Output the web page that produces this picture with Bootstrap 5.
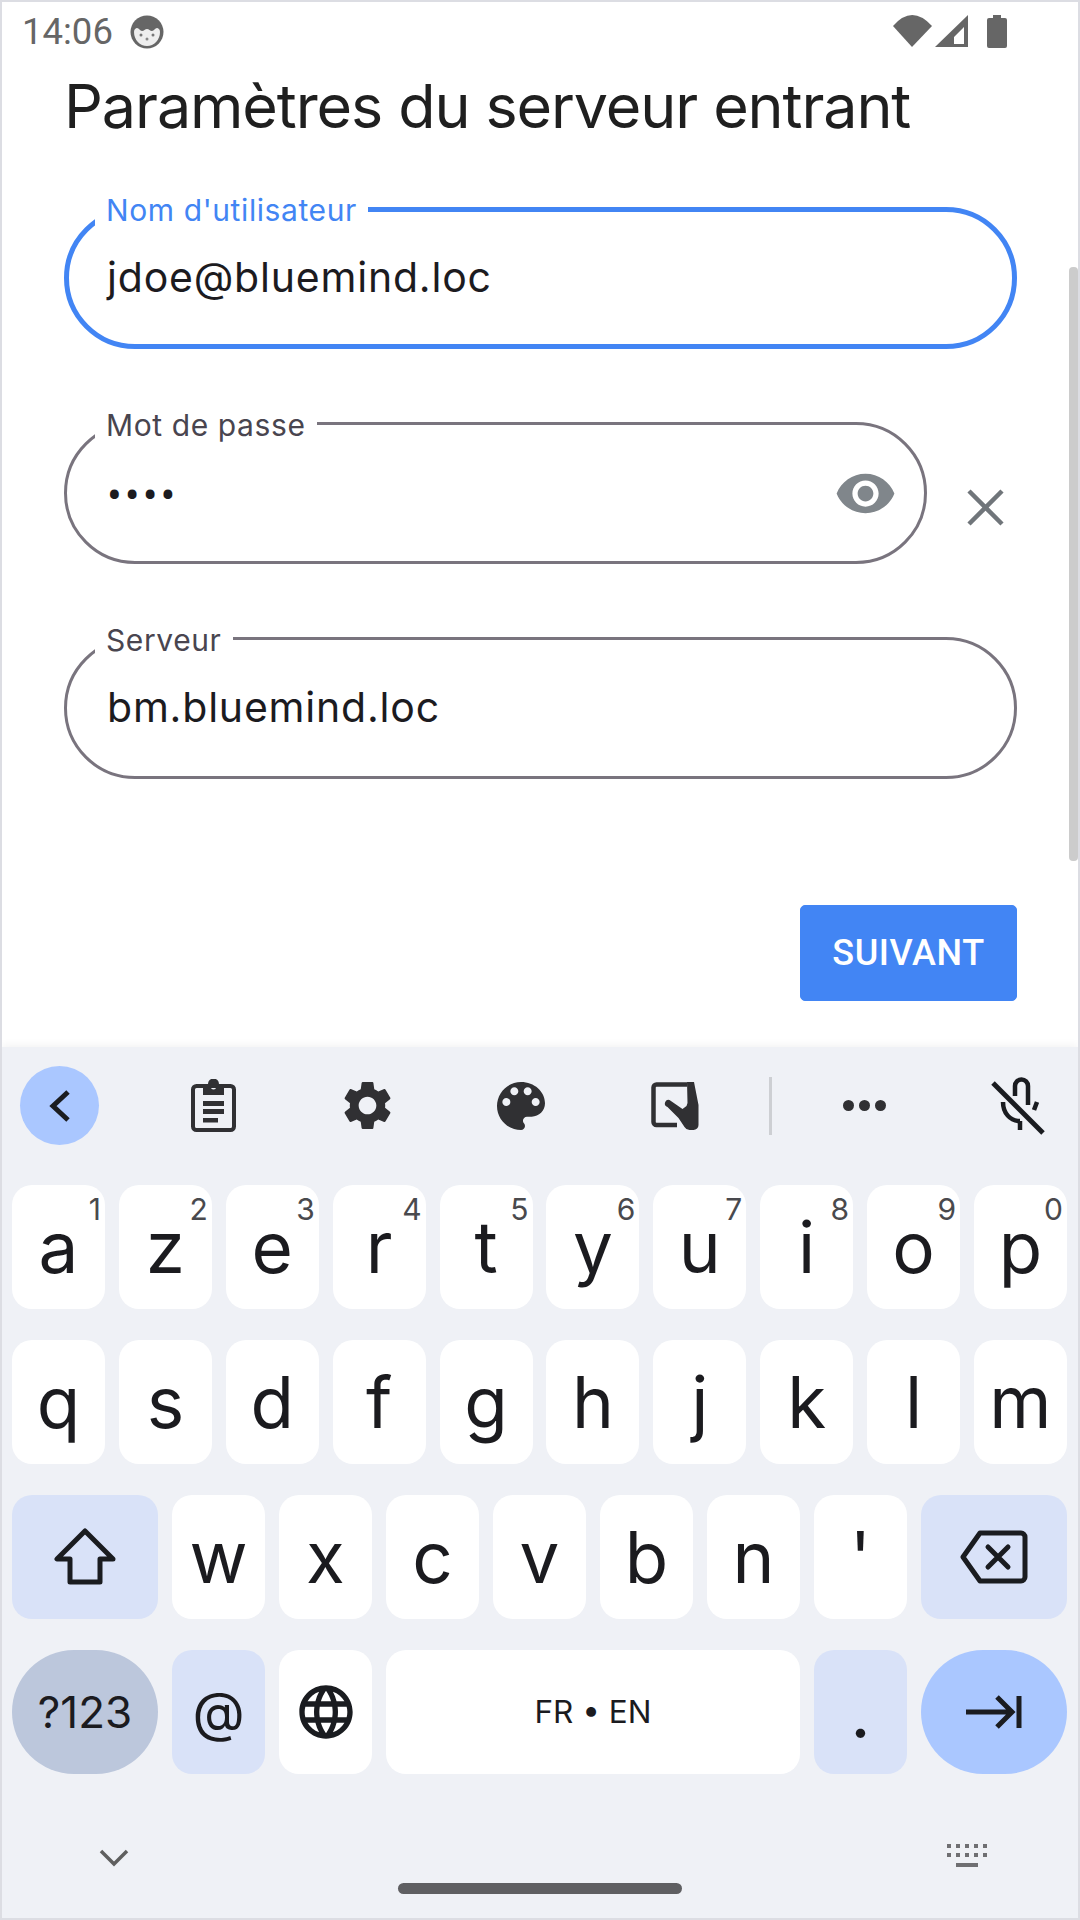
<!DOCTYPE html>
<html lang="fr">
<head>
  <meta charset="UTF-8" />
  <meta name="viewport" content="width=device-width, initial-scale=1.0"/>
  <title>Paramètres du serveur entrant</title>
  <link rel="stylesheet" href="https://cdn.jsdelivr.net/npm/bootstrap@5.3.0/dist/css/bootstrap.min.css"/>
  <style>
    body { margin: 0; background: #fff; font-family: Inter, Roboto, sans-serif; color: #1c1b1f; }
    .phone { position: relative; width: 1080px; height: 1920px; border: 2px solid #dcdde3; overflow: hidden; background: #fff; }

    .status-row { height: 60px; padding: 0 69px 0 20px; color: #666; font-family: Roboto, sans-serif; font-size: 36.5px; }
    .status-time { line-height: 1; }
    .status-left { gap: 17px; }

    .page-body { padding: 0 61px 0 62px; flex: 1 1 auto; }
    .page-title { font-family: Inter, Roboto, sans-serif; font-size: 61px; font-weight: 400; letter-spacing: -1.1px; line-height: 72px; margin: 8px 0 0 0; color: #1f1f1f; }

    .field { position: relative; height: 142px; }
    .field .form-control { height: 100%; border: 3px solid #79747e; border-radius: 71px; padding: 0 40px; font-family: Inter, Roboto, sans-serif; font-size: 41px; letter-spacing: .8px; color: #1c1b1f; display: flex; align-items: center; background: transparent; }
    .field-active .form-control { border: 5px solid #4285f4; padding: 0 38px; }
    .field-first { margin-top: 65px; }
    .field-label { position: absolute; left: 31px; top: -12px; height: 31px; padding: 0 11px; background: #fff; font-size: 30px; letter-spacing: .6px; line-height: 31px; color: #49454f; }
    .field-active .field-label { color: #4285f4; }
    .field-gap { margin-top: 73px; }
    .field-short { width: 863px; }
    .field .password-dots { font-family: Roboto, sans-serif; letter-spacing: 3px; font-size: 44px; padding-top: 6px; }
    .eye-icon { position: absolute; right: 30px; top: 40px; }
    .clear-icon { margin: 67px 13px 0 40px; }

    .next-btn { --bs-btn-bg: #4285f4; --bs-btn-border-color: #4285f4; width: 217px; height: 96px; margin-top: 126px; font-family: Roboto, sans-serif; font-size: 36px; font-weight: 500; letter-spacing: .6px; border-radius: 5px; padding: 0; }

    .scroll-thumb { position: absolute; right: 0; top: 265px; width: 9px; height: 594px; background: #ccc; border-radius: 4px; }

    .kbd { height: 871px; background: #eff1f6; box-shadow: 0 -2px 8px rgba(0,0,0,.05); flex: 0 0 auto; }
    .kbd-tools { height: 100px; padding: 19px 0 0 18px; }
    .tool-back { width: 79px; height: 79px; border-radius: 50%; background: #aac7ff; }
    .tool-cell { width: 154px; height: 79px; }
    .tool-first { margin-left: 37px; }
    .tool-sep { width: 3px; height: 58px; background: #cdcfd3; margin: 11px 16px 0 17px; }
    .tool-last { width: 100px; margin-left: 26px; }
    .tool-dots { gap: 5px; padding-right: 2px; }
    .dot-ico { width: 11px; height: 11px; border-radius: 50%; background: #303033; }

    .kbd-rows { padding: 38px 11px 0 10px; display: flex; flex-direction: column; gap: 31px; }
    .key { position: relative; width: 93px; height: 124px; flex: 0 0 auto; background: #fff; border-radius: 20px; font-size: 71px; line-height: 1; color: #1b1b1f; display: flex; align-items: center; justify-content: center; }
    .key-wide { width: 146px; }
    .key-mod { background: #d9e2f8; }
    .key-pill { border-radius: 62px; }
    .key-sym { background: #bcc7dc; font-size: 44px; }
    .key-go { background: #aac7ff; }
    .key-space { width: 414px; font-size: 31.5px; }
    .key-at { font-size: 54px; }
    .key-hint { position: absolute; top: 9px; right: 4px; font-size: 30px; line-height: 1; color: #49494d; }

    .kbd-foot { height: 148px; position: relative; }
    .foot-pill { position: absolute; left: 396px; top: 109px; width: 284px; height: 11px; border-radius: 6px; background: #5f5f62; }
    .foot-chev { position: absolute; left: 97px; top: 74px; }
    .foot-kbd { position: absolute; left: 945px; top: 70px; }
  </style>
</head>
<body>
  <div class="phone d-flex flex-column">
    <!-- status bar -->
    <div class="status-row d-flex align-items-center justify-content-between flex-shrink-0">
      <div class="status-left d-flex align-items-center">
        <span class="status-time">14:06</span>
        <svg width="34" height="34" viewBox="0 0 34 34">
          <circle cx="17" cy="17" r="16.500" fill="#666"/>
          <path d="M4 17c0-3 2-4 3-4 2 0 3 3 5 3s3-2 5-2 3 2 5 2 3-3 5-3c1 0 3 1 3 4 0 8-6 14-13 14S4 25 4 17z" fill="#eee"/>
          <circle cx="11" cy="20" r="1.500" fill="#777"/><circle cx="23" cy="20" r="1.500" fill="#777"/><circle cx="17" cy="24" r="1.500" fill="#888"/>
        </svg>
      </div>
      <svg width="118" height="38" viewBox="0 0 118 38" fill="#666">
        <path d="M2 13Q21-9 41 13L21 34z"/>
        <path fill-rule="evenodd" d="M44 34 77 2v32zM63 31h10V14L63 24z"/>
        <path d="M102 2h8v3h4a2 2 0 0 1 2 2v26a2 2 0 0 1-2 2H98a2 2 0 0 1-2-2V7a2 2 0 0 1 2-2h4z"/>
      </svg>
    </div>

    <!-- form -->
    <div class="page-body">
      <h1 class="page-title">Paramètres du serveur entrant</h1>

      <div class="field field-active field-first">
        <div class="form-control">jdoe@bluemind.loc</div>
        <span class="field-label">Nom d'utilisateur</span>
      </div>

      <div class="d-flex align-items-start field-gap">
        <div class="field field-short">
          <div class="form-control password-dots">••••</div>
          <span class="field-label">Mot de passe</span>
          <svg class="eye-icon" width="63" height="63" viewBox="0 0 24 24" fill="#80868b"><path d="M12 4.5C7 4.5 2.73 7.61 1 12c1.73 4.39 6 7.5 11 7.5s9.27-3.11 11-7.5c-1.73-4.39-6-7.5-11-7.5zM12 17c-2.76 0-5-2.24-5-5s2.24-5 5-5 5 2.24 5 5-2.24 5-5 5zm0-8c-1.66 0-3 1.34-3 3s1.34 3 3 3 3-1.34 3-3-1.34-3-3-3z"/></svg>
        </div>
        <svg class="clear-icon" width="37" height="37" viewBox="0 0 37 37"><path d="M2 2l33 33M35 2 2 35" stroke="#70757a" stroke-width="4.5" fill="none"/></svg>
      </div>

      <div class="field field-gap">
        <div class="form-control">bm.bluemind.loc</div>
        <span class="field-label">Serveur</span>
      </div>

      <div class="d-flex justify-content-end">
        <button type="button" class="btn btn-primary next-btn">SUIVANT</button>
      </div>
    </div>
    <div class="scroll-thumb"></div>

    <!-- keyboard -->
    <div class="kbd">
      <div class="kbd-tools d-flex align-items-start">
        <div class="tool-back d-flex align-items-center justify-content-center">
          <svg width="22" height="34" viewBox="0 0 22 34"><path d="M19 3 4 17l15 14" fill="none" stroke="#1a1c20" stroke-width="5"/></svg>
        </div>
        <div class="tool-cell tool-first d-flex align-items-center justify-content-center">
          <svg width="45" height="53" viewBox="0 0 45 53" fill="#303033">
            <rect x="2" y="7" width="41" height="44" rx="3.5" fill="none" stroke="#303033" stroke-width="4"/>
            <path fill-rule="evenodd" d="M12 5h5a5.5 5.5 0 0 1 11 0h5v11H12zM22.500 5.500a2.500 2.500 0 1 0 0 5 2.500 2.500 0 0 0 0-5z"/>
            <path d="M12 22h21v5H12zM12 30h21v5H12zM12 39h15v4.500H12z"/>
          </svg>
        </div>
        <div class="tool-cell d-flex align-items-center justify-content-center">
          <svg width="59" height="59" viewBox="0 0 24 24" fill="#303033"><path d="M19.14 12.94c.04-.3.06-.61.06-.94 0-.32-.02-.64-.07-.94l2.03-1.58c.18-.14.23-.41.12-.61l-1.92-3.32c-.12-.22-.37-.29-.59-.22l-2.39.96c-.5-.38-1.03-.7-1.62-.94l-.36-2.54c-.04-.24-.24-.41-.48-.41h-3.84c-.24 0-.43.17-.47.41l-.36 2.54c-.59.24-1.13.57-1.62.94l-2.39-.96c-.22-.08-.47 0-.59.22L2.74 8.87c-.12.21-.08.47.12.61l2.03 1.58c-.05.3-.09.63-.09.94s.02.64.07.94l-2.03 1.58c-.18.14-.23.41-.12.61l1.92 3.32c.12.22.37.29.59.22l2.39-.96c.5.38 1.03.7 1.62.94l.36 2.54c.05.24.24.41.48.41h3.84c.24 0 .44-.17.47-.41l.36-2.54c.59-.24 1.13-.56 1.62-.94l2.39.96c.22.08.47 0 .59-.22l1.92-3.32c.12-.22.07-.47-.12-.61l-2.01-1.58zM12 15.6c-1.98 0-3.6-1.62-3.6-3.6s1.62-3.6 3.6-3.6 3.6 1.62 3.6 3.6-1.62 3.6-3.6 3.6z"/></svg>
        </div>
        <div class="tool-cell d-flex align-items-center justify-content-center">
          <svg width="64" height="64" viewBox="0 0 24 24" fill="#303033"><path d="M12 3c-4.97 0-9 4.03-9 9s4.03 9 9 9c.83 0 1.5-.67 1.5-1.5 0-.39-.15-.74-.39-1.01-.23-.26-.38-.61-.38-.99 0-.83.67-1.5 1.5-1.5H16c2.76 0 5-2.24 5-5 0-4.42-4.03-8-9-8zm-5.500 9c-.83 0-1.500-.67-1.500-1.500S5.670 9 6.500 9 8 9.670 8 10.500 7.330 12 6.500 12zm3-4C8.670 8 8 7.330 8 6.500S8.670 5 9.500 5s1.500.67 1.500 1.500S10.330 8 9.500 8zm5 0c-.83 0-1.500-.67-1.500-1.500S13.670 5 14.500 5s1.500.67 1.500 1.500S15.330 8 14.500 8zm3 4c-.83 0-1.500-.67-1.500-1.500S16.670 9 17.500 9s1.500.67 1.500 1.500-.67 1.500-1.500 1.500z"/></svg>
        </div>
        <div class="tool-cell d-flex align-items-center justify-content-center">
          <svg width="48" height="48" viewBox="0 0 48 48" fill="#303033">
            <path d="M36 2.500H5.500a3 3 0 0 0-3 3V40a3 3 0 0 0 3 3H26" fill="none" stroke="#303033" stroke-width="4.500"/>
            <path d="M36 0h7l4.500 23v20a5 5 0 0 1-5 5h-4a6 6 0 0 1-5-3l-6-9-11-11a3.500 3.500 0 0 1 2-7l13 9 4-3 1-3z"/>
          </svg>
        </div>
        <div class="tool-sep"></div>
        <div class="tool-cell tool-dots d-flex align-items-center justify-content-center">
          <span class="dot-ico"></span><span class="dot-ico"></span><span class="dot-ico"></span>
        </div>
        <div class="tool-cell tool-last d-flex align-items-center justify-content-center">
          <svg width="56" height="58" viewBox="0 0 56 58" fill="none" stroke="#1a1c20" stroke-width="4.500">
            <path d="M3 6l50 50" stroke-width="5"/>
            <path d="M25 19V9a6.500 6.500 0 0 1 13 0v19"/>
            <path d="M13 25c0 11 7 19 17 19M47 25l-3 8"/>
            <path d="M30 44v9"/>
          </svg>
        </div>
      </div>

      <div class="kbd-rows">
        <div class="d-flex justify-content-between">
          <div class="key">a<span class="key-hint">1</span></div>
          <div class="key">z<span class="key-hint">2</span></div>
          <div class="key">e<span class="key-hint">3</span></div>
          <div class="key">r<span class="key-hint">4</span></div>
          <div class="key">t<span class="key-hint">5</span></div>
          <div class="key">y<span class="key-hint">6</span></div>
          <div class="key">u<span class="key-hint">7</span></div>
          <div class="key">i<span class="key-hint">8</span></div>
          <div class="key">o<span class="key-hint">9</span></div>
          <div class="key">p<span class="key-hint">0</span></div>
        </div>
        <div class="d-flex justify-content-between">
          <div class="key">q</div><div class="key">s</div><div class="key">d</div><div class="key">f</div><div class="key">g</div>
          <div class="key">h</div><div class="key">j</div><div class="key">k</div><div class="key">l</div><div class="key">m</div>
        </div>
        <div class="d-flex justify-content-between">
          <div class="key key-wide key-mod">
            <svg width="62" height="58" viewBox="0 0 62 58"><path d="M31 3 3 31h13v23h30V31h13z" fill="none" stroke="#1a1c20" stroke-width="5" stroke-linejoin="round"/></svg>
          </div>
          <div class="key">w</div><div class="key">x</div><div class="key">c</div><div class="key">v</div>
          <div class="key">b</div><div class="key">n</div><div class="key">'</div>
          <div class="key key-wide key-mod">
            <svg width="68" height="54" viewBox="0 0 68 54" fill="none" stroke="#1a1c20" stroke-width="5"><path d="M20 3h41a4 4 0 0 1 4 4v40a4 4 0 0 1-4 4H20L3 27z" stroke-linejoin="round"/><path d="M28 17l20 20M48 17 28 37" stroke-linecap="round"/></svg>
          </div>
        </div>
        <div class="d-flex justify-content-between">
          <div class="key key-wide key-pill key-sym">?123</div>
          <div class="key key-mod key-at">@</div>
          <div class="key">
            <svg width="64" height="64" viewBox="0 0 24 24" fill="#1a1c20"><path d="M11.99 2C6.47 2 2 6.48 2 12s4.47 10 9.99 10C17.52 22 22 17.52 22 12S17.52 2 11.99 2zm6.93 6h-2.95c-.32-1.25-.78-2.45-1.38-3.56 1.84.63 3.37 1.91 4.33 3.56zM12 4.040c.83 1.2 1.48 2.53 1.91 3.96h-3.82c.43-1.43 1.08-2.76 1.91-3.96zM4.260 14C4.100 13.360 4 12.690 4 12s.1-1.360.26-2h3.380c-.08.66-.14 1.32-.14 2 0 .68.06 1.34.14 2H4.260zm.82 2h2.950c.32 1.25.78 2.45 1.380 3.560-1.840-.63-3.370-1.900-4.330-3.560zm2.950-8H5.080c.96-1.660 2.490-2.930 4.330-3.560C8.810 5.550 8.350 6.750 8.030 8zM12 19.960c-.83-1.200-1.480-2.530-1.910-3.960h3.820c-.43 1.430-1.080 2.760-1.910 3.960zM14.340 14H9.660c-.09-.66-.16-1.320-.16-2 0-.68.07-1.350.16-2h4.680c.09.650.16 1.320.16 2 0 .68-.07 1.340-.16 2zm.25 5.560c.6-1.110 1.060-2.310 1.380-3.560h2.950c-.96 1.650-2.490 2.930-4.330 3.560zM16.360 14c.08-.66.14-1.320.14-2 0-.68-.06-1.340-.14-2h3.380c.16.64.26 1.310.26 2s-.1 1.360-.26 2h-3.380z"/></svg>
          </div>
          <div class="key key-space">FR • EN</div>
          <div class="key key-mod">.</div>
          <div class="key key-wide key-pill key-go">
            <svg width="60" height="36" viewBox="0 0 60 36" fill="none" stroke="#1a1c20" stroke-width="5"><path d="M2 18h46M33 3l15 15-15 15"/><path d="M55 2v32"/></svg>
          </div>
        </div>
      </div>

      <div class="kbd-foot">
        <svg class="foot-chev" width="30" height="20" viewBox="0 0 30 20"><path d="M2 3l13 13L28 3" fill="none" stroke="#5f5f5f" stroke-width="3.500"/></svg>
        <div class="foot-pill"></div>
        <svg class="foot-kbd" width="42" height="24" viewBox="0 0 42 24" fill="#6f6f72"><path d="M0 0h4v4H0zM9 0h4v4H9zM18 0h4v4h-4zM27 0h4v4h-4zM36 0h4v4h-4zM0 9h4v4H0zM9 9h4v4H9zM18 9h4v4h-4zM27 9h4v4h-4zM36 9h4v4h-4zM9 19h22v4H9z"/></svg>
      </div>
    </div>
  </div>
  <script src="https://cdn.jsdelivr.net/npm/bootstrap@5.3.0/dist/js/bootstrap.bundle.min.js"></script>
</body>
</html>
